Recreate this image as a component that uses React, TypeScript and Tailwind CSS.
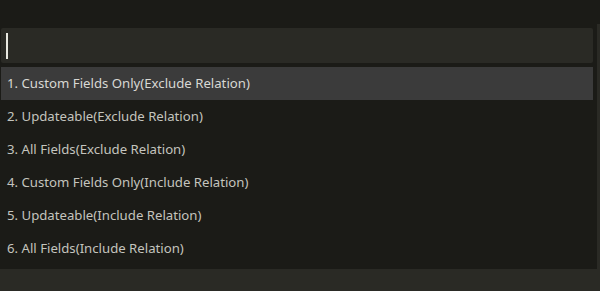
import React from 'react';

const options = [
  '1. Custom Fields Only(Exclude Relation)',
  '2. Updateable(Exclude Relation)',
  '3. All Fields(Exclude Relation)',
  '4. Custom Fields Only(Include Relation)',
  '5. Updateable(Include Relation)',
  '6. All Fields(Include Relation)',
];

export default function App() {
  const selected = 0;

  return (
    <div
      className="flex h-[291px] w-[600px] flex-col bg-[#1b1b17] text-[13.2px] text-[#c4c4be]"
      style={{ fontFamily: '"Segoe UI", "Noto Sans", sans-serif' }}
    >
      <div className="h-[24px]" />
      <div className="flex flex-1">
        {/* quick pick */}
        <div className="flex flex-1 flex-col pl-[1px] pr-[4px] pt-[4px]">
          <div className="flex h-[35px] items-center rounded-[2px] bg-[#2a2a25] pl-[5px]">
            <span className="h-[26px] w-[2px] bg-[#e8e8e0]" />
          </div>
          <ul className="mt-[4px] flex flex-col">
            {options.map((label, i) => (
              <li
                key={label}
                className={
                  i === selected
                    ? 'flex h-[33px] items-center bg-[#3b3b3b] pl-[6px] text-[#d8d8d4]'
                    : 'flex h-[33px] items-center pl-[6px]'
                }
              >
                {label}
              </li>
            ))}
          </ul>
        </div>
        {/* scroll edge */}
        <div className="w-[3px] bg-[#2a2a25]" />
      </div>
      <div className="h-[22px] bg-[#2a2a25]" />
    </div>
  );
}
